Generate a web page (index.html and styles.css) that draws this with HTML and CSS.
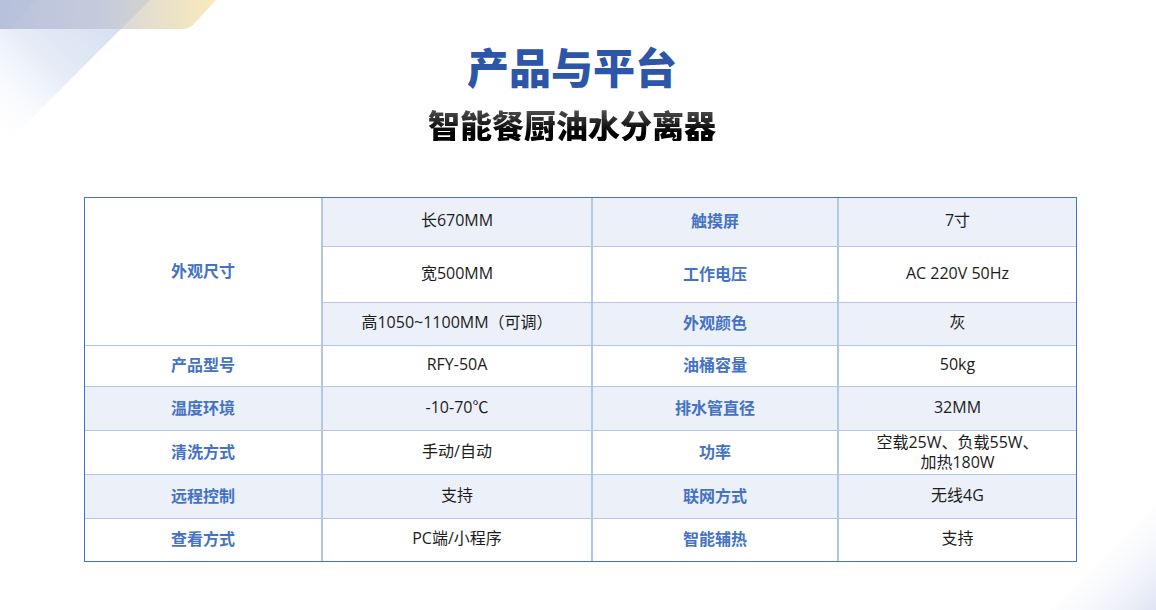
FILE: index.html
```html
<!DOCTYPE html>
<html lang="zh-CN">
<head>
<meta charset="utf-8">
<title>产品与平台</title>
<link rel="stylesheet" href="styles.css">
</head>
<body>
<div class="page">
  <svg class="deco-tl" width="260" height="170" viewBox="0 0 260 170" aria-hidden="true">
    <defs>
      <linearGradient id="gDiag" x1="1" y1="0" x2="0" y2="1">
        <stop offset="0" stop-color="#cfd9ee"/>
        <stop offset="0.55" stop-color="#e6ecf7"/>
        <stop offset="1" stop-color="#ffffff" stop-opacity="0"/>
      </linearGradient>
      <linearGradient id="gBar" x1="0" y1="0" x2="1" y2="0">
        <stop offset="0" stop-color="#b9c3dc"/>
        <stop offset="0.45" stop-color="#ccd0dc"/>
        <stop offset="0.75" stop-color="#e6ddc4"/>
        <stop offset="1" stop-color="#f8e6b4"/>
      </linearGradient>
    </defs>
    <polygon points="0,0 150,0 0,150" fill="url(#gDiag)"/>
    <path d="M0 0 H216 L194 24 Q189 29 182 29 H0 Z" fill="url(#gBar)" opacity="0.9"/>
    <polygon points="0,0 36,0 10,29 0,29" fill="#aab5d3" opacity="0.35"/>
    <polygon points="36,0 150,0 121,29 10,29" fill="#aab8d8" opacity="0.25"/>
  </svg>
  <svg class="deco-br" width="120" height="110" viewBox="0 0 120 110" aria-hidden="true">
    <defs>
      <linearGradient id="gBr" x1="0" y1="0" x2="1" y2="1">
        <stop offset="0.35" stop-color="#ffffff" stop-opacity="0"/>
        <stop offset="1" stop-color="#dfe3f3"/>
      </linearGradient>
    </defs>
    <polygon points="120,4 120,110 14,110" fill="url(#gBr)"/>
  </svg>

  <header class="head">
    <h1 class="title">产品与平台</h1>
    <h2 class="subtitle">智能餐厨油水分离器</h2>
  </header>

  <div class="spec">
    <div class="c k r1 span3 white">外观尺寸</div>
    <div class="c v alt">长670MM</div>
    <div class="c k alt">触摸屏</div>
    <div class="c v alt last">7寸</div>

    <div class="c v">宽500MM</div>
    <div class="c k">工作电压</div>
    <div class="c v last">AC 220V 50Hz</div>

    <div class="c v alt">高1050~1100MM（可调）</div>
    <div class="c k alt">外观颜色</div>
    <div class="c v alt last">灰</div>

    <div class="c k">产品型号</div>
    <div class="c v">RFY-50A</div>
    <div class="c k">油桶容量</div>
    <div class="c v last">50kg</div>

    <div class="c k alt">温度环境</div>
    <div class="c v alt">-10-70℃</div>
    <div class="c k alt">排水管直径</div>
    <div class="c v alt last">32MM</div>

    <div class="c k">清洗方式</div>
    <div class="c v">手动/自动</div>
    <div class="c k">功率</div>
    <div class="c v last two">空载25W、负载55W、<br>加热180W</div>

    <div class="c k alt">远程控制</div>
    <div class="c v alt">支持</div>
    <div class="c k alt">联网方式</div>
    <div class="c v alt last">无线4G</div>

    <div class="c k bottom">查看方式</div>
    <div class="c v bottom">PC端/小程序</div>
    <div class="c k bottom">智能辅热</div>
    <div class="c v bottom last">支持</div>
  </div>
</div>
</body>
</html>
```

FILE: styles.css
```css
* { box-sizing: border-box; }
html, body { margin: 0; padding: 0; background: #ffffff; }
body {
  width: 1156px;
  height: 610px;
  overflow: hidden;
  font-family: "Noto Sans CJK SC", "Noto Sans", sans-serif;
  color: #1c1c1c;
}
.page {
  position: relative;
  width: 1156px;
  height: 610px;
  padding-top: 45px;
}
.deco-tl { position: absolute; left: 0; top: 0; z-index: 0; }
.deco-br { position: absolute; right: 0; bottom: 0; z-index: 0; }

.head {
  position: relative;
  z-index: 1;
  padding-right: 12px;
  text-align: center;
}
.title {
  margin: 0;
  font-size: 42px;
  line-height: 42px;
  font-weight: 900;
  color: #2d56a8;
  letter-spacing: 0;
}
.subtitle {
  display: inline-block;
  margin: 20px 0 0;
  font-size: 32px;
  line-height: 34px;
  font-weight: 900;
  background: linear-gradient(180deg, #5a5a5a 0%, #000000 75%);
  -webkit-background-clip: text;
  background-clip: text;
  color: transparent;
}

.spec {
  position: relative;
  z-index: 1;
  margin: 54px 0 0 84px;
  width: 993px;
  border: 1px solid #4472c4;
  display: grid;
  grid-template-columns: 238px 270px 246px 237px;
  grid-template-rows: 49px 56px 43px 41px 44px 44px 44px 42px;
  background: #ffffff;
}
.c {
  display: flex;
  align-items: center;
  justify-content: center;
  text-align: center;
  padding-bottom: 4px;
  font-family: "Open Sans", "Noto Sans CJK SC", sans-serif;
  font-size: 16px;
  line-height: 20px;
  border-right: 2px solid #b4c6e7;
  border-bottom: 1px solid #b4c6e7;
  background: #ffffff;
}
.c.last { border-right: none; }
.c.bottom { border-bottom: none; }
.c.alt { background: #ecf0f9; }
.c.white { background: #ffffff; }
.span3 { grid-row: span 3; }
.k {
  color: #4472c4;
  font-weight: 700;
  font-family: "Noto Sans CJK SC", sans-serif;
}
.v { color: #1c1c1c; }
.two { line-height: 20px; padding-bottom: 2px; }
```
